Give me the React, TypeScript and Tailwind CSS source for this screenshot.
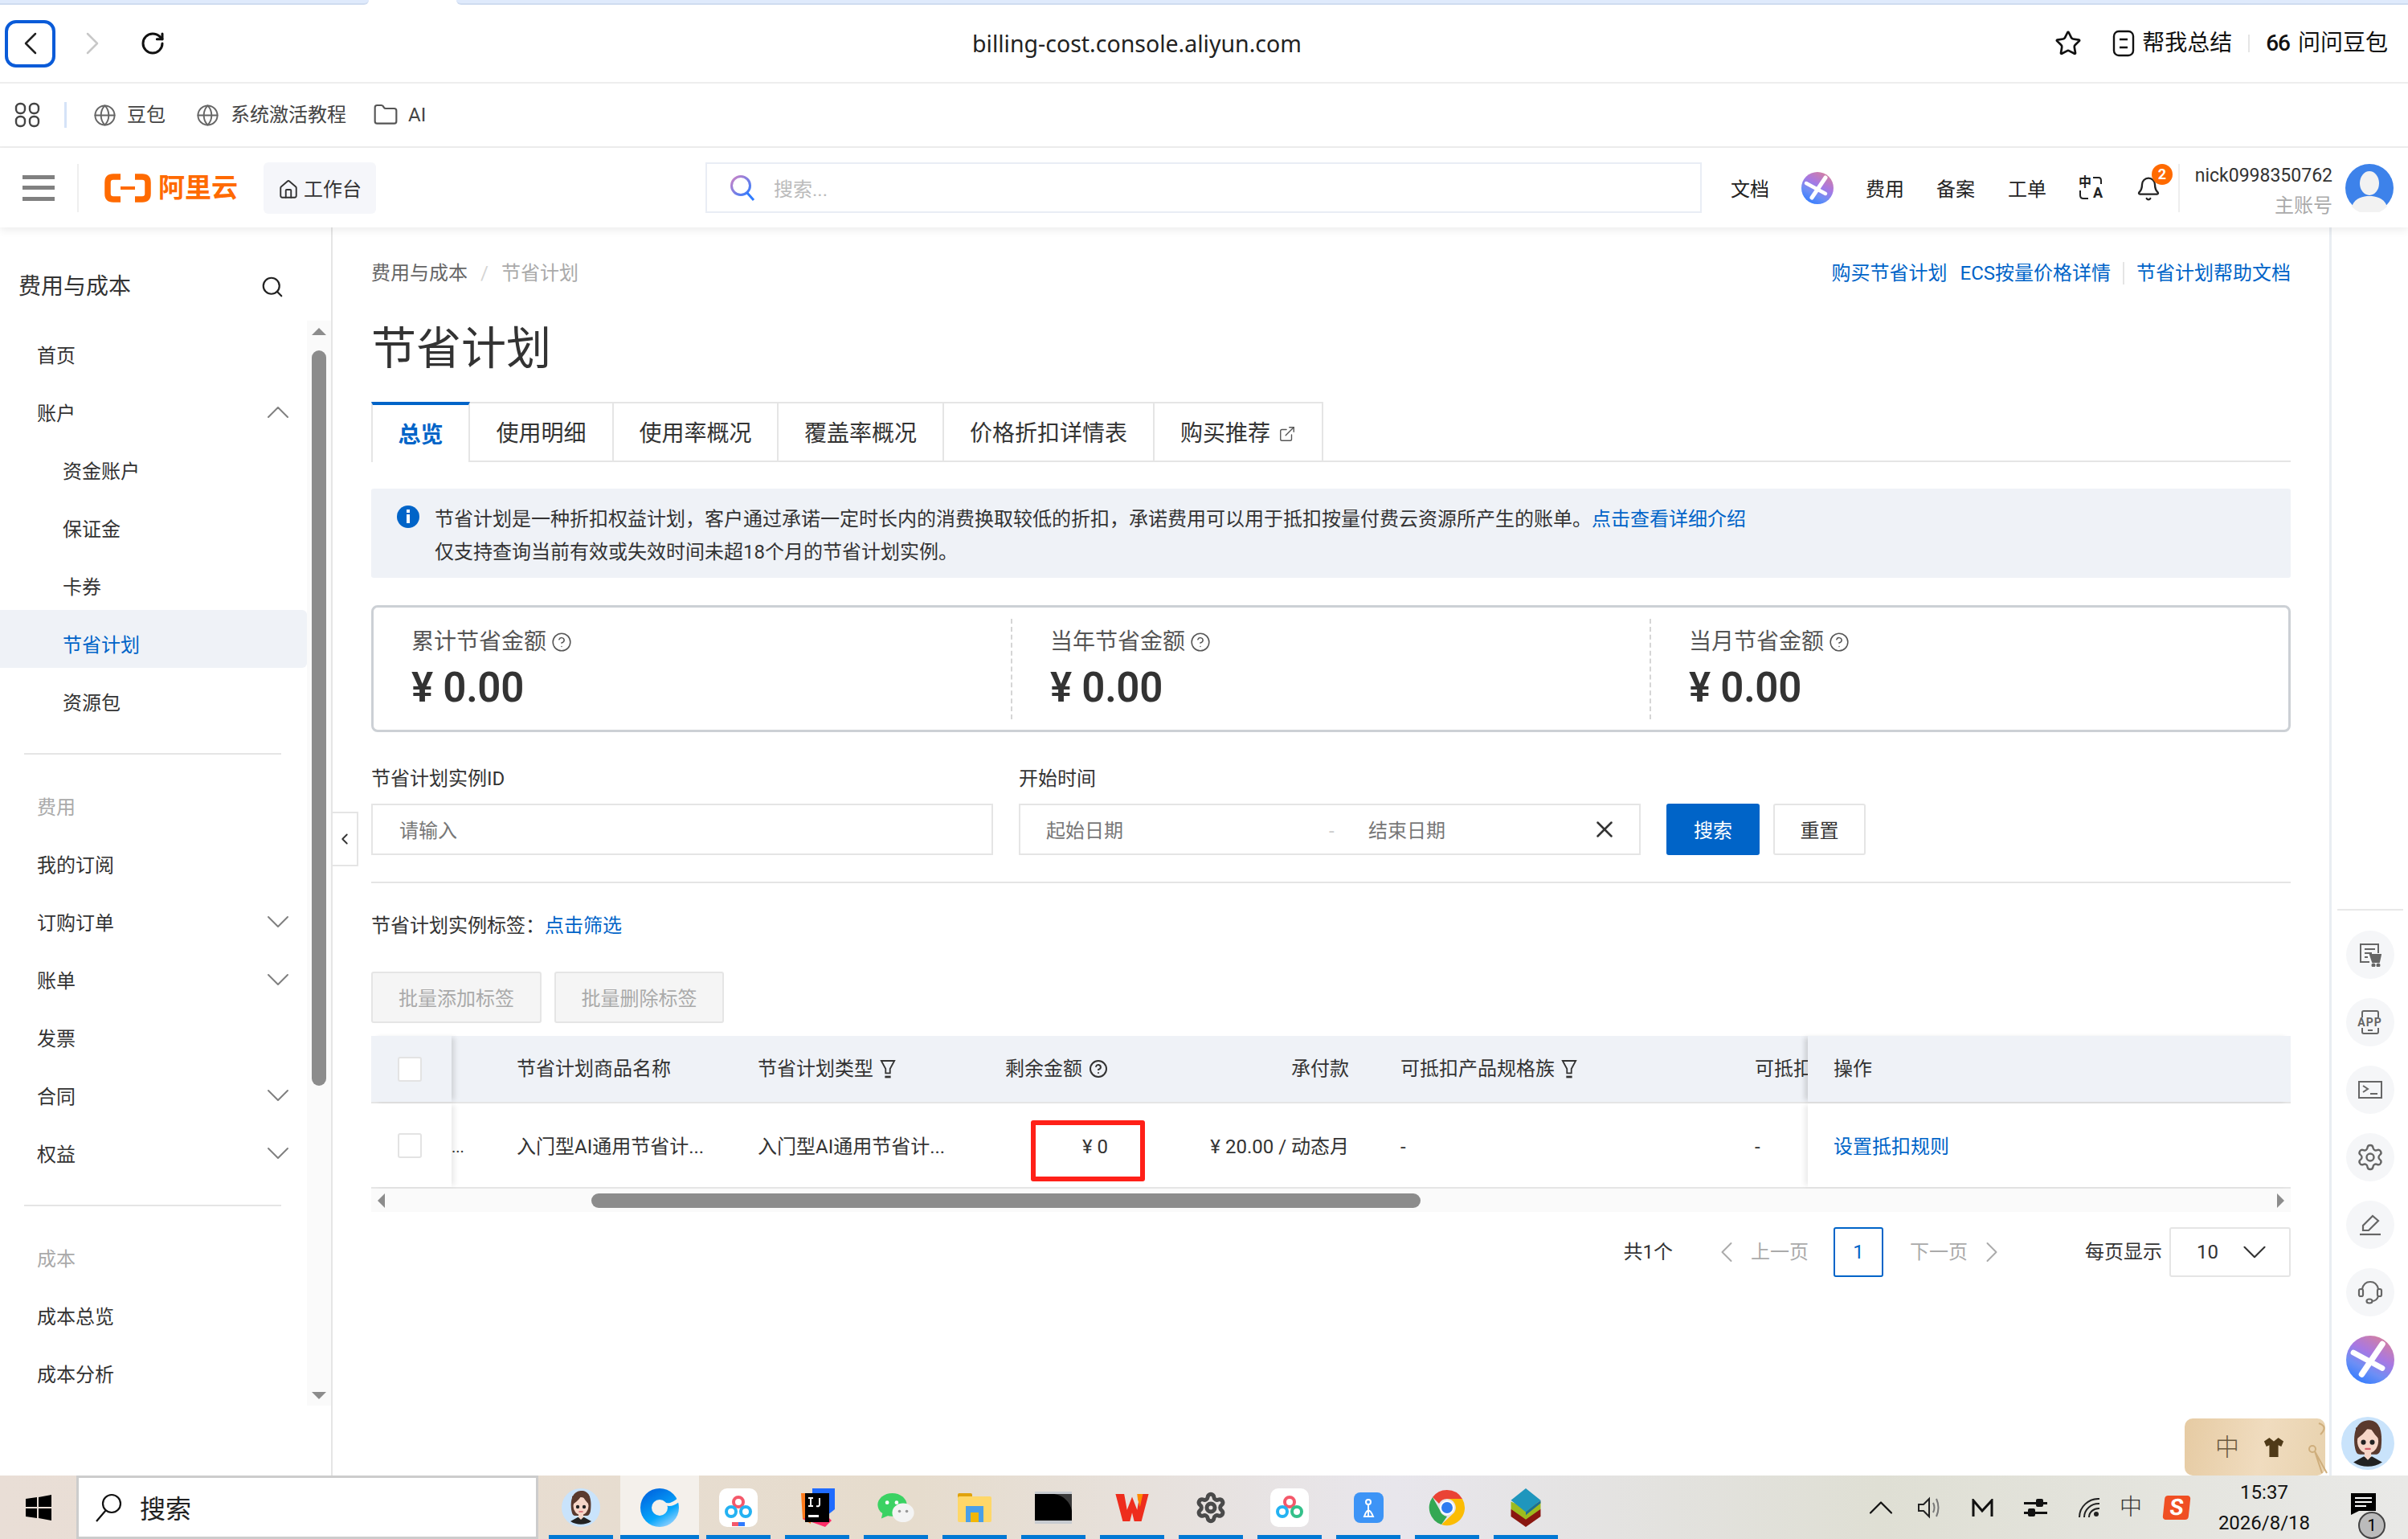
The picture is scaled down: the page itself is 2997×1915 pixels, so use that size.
import {
  Bell,
  ChevronDown,
  ChevronLeft,
  ChevronRight,
  ChevronUp,
  CircleHelp,
  ExternalLink,
  Folder,
  Globe,
  House,
  RotateCw,
  Search,
  Settings,
  Star,
  X,
} from "lucide-react";

const nav = [
  { label: "首页" },
  { label: "账户", arrow: "up" },
  { label: "资金账户", sub: true },
  { label: "保证金", sub: true },
  { label: "卡券", sub: true },
  { label: "节省计划", sub: true, active: true },
  { label: "资源包", sub: true },
  { divider: true },
  { label: "费用", muted: true },
  { label: "我的订阅" },
  { label: "订购订单", arrow: "down" },
  { label: "账单", arrow: "down" },
  { label: "发票" },
  { label: "合同", arrow: "down" },
  { label: "权益", arrow: "down" },
  { divider: true },
  { label: "成本", muted: true },
  { label: "成本总览" },
  { label: "成本分析" },
];

const tabs = [
  { label: "使用明细", w: "w-[179px]" },
  { label: "使用率概况", w: "w-[205px]" },
  { label: "覆盖率概况", w: "w-[206px]" },
  { label: "价格折扣详情表", w: "w-[262px]" },
];

const stats = ["累计节省金额", "当年节省金额", "当月节省金额"];

// 带渐变的 AI 图标
function AiBadge({ id, size }: { id: string; size: number }) {
  return (
    <svg width={size} height={size} viewBox="0 0 40 40">
      <defs>
        <linearGradient id={id} x1="0.25" y1="1" x2="0.8" y2="0">
          <stop offset="0" stopColor="#2f7bff" />
          <stop offset="0.3" stopColor="#6d8ff5" />
          <stop offset="0.6" stopColor="#a878e2" />
          <stop offset="1" stopColor="#d8809a" />
        </linearGradient>
      </defs>
      <circle cx="20" cy="20" r="20" fill={`url(#${id})`} />
      <path d="M30 7 L13 32" stroke="#fff" strokeWidth="5" strokeLinecap="round" />
      <path d="M6 14 L30 27" stroke="#fff" strokeWidth="4.5" strokeLinecap="round" />
    </svg>
  );
}

function FilterIcon() {
  return (
    <svg width="20" height="24" viewBox="0 0 22 26" fill="none" stroke="#333" strokeWidth="2">
      <path d="M2 2 H20 L14 13 V19 H8 V13 Z" />
      <path d="M7 24 H15" strokeWidth="3" />
    </svg>
  );
}

function Checkbox() {
  return <div className="w-[30px] h-[31px] rounded-[3px] border-2 border-[#e3e3e3] bg-white" />;
}

function GirlAvatar({ size }: { size: number }) {
  return (
    <svg width={size} height={size} viewBox="0 0 48 48">
      <circle cx="24" cy="24" r="24" fill="#c9e3fb" />
      <path d="M12 26 C10 8 18 3 25 3 C33 3 38 10 36 28 C35 33 33 34 31 34 H17 C14 34 13 32 12 26Z" fill="#5a3a2e" />
      <ellipse cx="24" cy="22" rx="9.5" ry="11" fill="#f6d6c8" />
      <path d="M14 20 C18 17 23 13 25 8 C28 13 31 17 34 20 L35 10 L25 4 L13 10Z" fill="#5a3a2e" />
      <circle cx="20" cy="23" r="2.2" fill="#222" />
      <circle cx="28" cy="23" r="2.2" fill="#222" />
      <path d="M22 29 H26" stroke="#d4606a" strokeWidth="1.5" strokeLinecap="round" />
      <path d="M20 36 H28 L37 41 A24 24 0 0 1 11 41Z" fill="#222" />
      <path d="M21 32 H27 V36 L24 39 L21 36Z" fill="#f6d6c8" />
    </svg>
  );
}

// 任务栏图标
function Edge() {
  return (
    <svg width="48" height="48" viewBox="0 0 48 48" fill="none">
      <defs>
        <linearGradient id="tbq" x1="0.3" y1="0" x2="0.9" y2="1">
          <stop offset="0" stopColor="#0067e0" />
          <stop offset="0.6" stopColor="#06a6fb" />
          <stop offset="1" stopColor="#b6dcff" />
        </linearGradient>
      </defs>
      <circle cx="24" cy="24" r="24" fill="url(#tbq)" />
      <circle cx="24" cy="24" r="10" fill="#f4f0eb" />
      <path d="M30 17 C34 20 40 18 48 11 V17 C42 22 36 23 31 21Z" fill="#f4f0eb" />
    </svg>
  );
}

function BaiduCloud({ accent }: { accent?: boolean }) {
  return (
    <svg width="48" height="48" viewBox="0 0 48 48" fill="none">
      <rect width="48" height="48" rx="10" fill="#fff" />
      <circle cx="24" cy="17" r="6" stroke="#f4586a" strokeWidth="4" />
      <circle cx="15" cy="29" r="6" stroke="#24b2f2" strokeWidth="4" />
      <circle cx="33" cy="29" r="6" stroke={accent ? "#34c08a" : "#24b2f2"} strokeWidth="4" />
      {!accent && <rect x="16" y="42" width="8" height="5" fill="#f4586a" />}
      {!accent && <rect x="24" y="42" width="8" height="5" fill="#2f7bff" />}
    </svg>
  );
}

function Idea() {
  return (
    <svg width="48" height="48" viewBox="0 0 48 48">
      <path d="M4 6 H18 L16 44 L6 38Z" fill="#ff7a1a" />
      <path d="M18 0 H46 V26 L36 34 H18Z" fill="#1f6bff" />
      <path d="M6 38 L34 48 L42 40 L30 28Z" fill="#ff2d68" />
      <rect x="9" y="6" width="30" height="36" fill="#000" />
      <path d="M13 12 H19 M16 12 V22 M13 22 H19 M27 12 V20 Q27 23 23 22" stroke="#fff" strokeWidth="2" fill="none" />
      <rect x="13" y="33" width="13" height="3" fill="#fff" />
    </svg>
  );
}

function WeChat() {
  return (
    <svg width="48" height="38" viewBox="0 0 52 42">
      <ellipse cx="21" cy="17" rx="20" ry="16" fill="#3bd263" />
      <path d="M8 27 L6 36 L18 31Z" fill="#3bd263" />
      <circle cx="14" cy="14" r="2.6" fill="#fff" />
      <circle cx="27" cy="14" r="2.6" fill="#fff" />
      <ellipse cx="36" cy="28" rx="15" ry="13" fill="#f4f4f4" />
      <circle cx="31" cy="26" r="2" fill="#999" />
      <circle cx="41" cy="26" r="2" fill="#999" />
    </svg>
  );
}

function Explorer() {
  return (
    <svg width="42" height="36" viewBox="0 0 42 36">
      <rect x="0" y="0" width="18" height="10" rx="2" fill="#e0a20c" />
      <rect x="0" y="4" width="42" height="32" rx="2" fill="#ffd768" />
      <path d="M10 16 H32 V36 H26 V24 H16 V36 H10Z" fill="#4a9fe8" />
      <rect x="16" y="24" width="10" height="12" fill="#f2b705" />
    </svg>
  );
}

function Terminal() {
  return (
    <svg width="46" height="40" viewBox="0 0 46 40">
      <rect width="46" height="40" fill="#c7cbd0" />
      <rect y="3" width="46" height="33" fill="#000" />
      <path d="M46 3 H24 C36 5 44 13 46 24Z" fill="#3a3a3a" />
    </svg>
  );
}

function Wps() {
  return (
    <svg width="48" height="34" viewBox="0 0 50 38">
      <path d="M2 0 H14 L18 22 L25 4 L32 22 L36 0 H48 L38 38 H28 L25 26 L22 38 H12Z" fill="#ee2d1d" />
      <path d="M32 0 H40 L36 18 L33 8Z" fill="#ff8a00" />
    </svg>
  );
}

function Chrome() {
  return (
    <svg width="48" height="48" viewBox="0 0 48 48">
      <path d="M24 2 A22 22 0 0 1 43 13 H24 A11 11 0 0 0 14 19 L6 11 A22 22 0 0 1 24 2Z" fill="#ea4335" />
      <path d="M6 11 L15 27 A11 11 0 0 0 24 35 L17 45 A22 22 0 0 1 6 11Z" fill="#34a853" />
      <path d="M43 13 A22 22 0 0 1 17 45 L33 30 A11 11 0 0 0 24 13Z" fill="#fbbc04" />
      <circle cx="24" cy="24" r="9" fill="#fff" />
      <circle cx="24" cy="24" r="7" fill="#2f7cf0" />
    </svg>
  );
}

function Stack() {
  return (
    <svg width="44" height="48" viewBox="0 0 44 52">
      <path d="M22 34 L42 28 V38 L22 52 L2 38 V28Z" fill="#8a1710" />
      <path d="M22 26 L42 18 V28 L22 42 L2 28 V18Z" fill="#9dbb1e" />
      <path d="M22 0 L42 16 L22 32 L2 16Z" fill="#1f96bd" />
      <path d="M22 32 L42 16 V20 L22 36Z" fill="#1d6e94" />
    </svg>
  );
}

function ToolIcon() {
  return (
    <svg width="37" height="38" viewBox="0 0 37 38" fill="none">
      <rect width="37" height="38" rx="8" fill="#3d94f6" />
      <circle cx="18" cy="12" r="3" stroke="#fff" strokeWidth="2" />
      <path d="M13 30 Q18 15 24 30Z M18 16 V30" stroke="#fff" strokeWidth="2" />
    </svg>
  );
}

const taskIcons = [
  <GirlAvatar key="girl" size={48} />,
  <Edge key="edge" />,
  <BaiduCloud key="baidu" />,
  <Idea key="idea" />,
  <WeChat key="wechat" />,
  <Explorer key="explorer" />,
  <Terminal key="terminal" />,
  <Wps key="wps" />,
  <Settings key="gear" size={40} color="#4a4a4a" strokeWidth={3} />,
  <BaiduCloud key="baidu2" accent />,
  <ToolIcon key="tool" />,
  <Chrome key="chrome" />,
  <Stack key="stack" />,
];

function Sidebar() {
  return (
    <aside className="w-[414px] shrink-0 border-r-2 border-[#e5e5e5] flex flex-col">
      <div className="h-[116px] pt-[32px] pl-[23px] pr-[58px] flex items-center justify-between">
        <span className="text-[28px] text-[#333]">费用与成本</span>
        <Search size={30} color="#222" strokeWidth={1.75} />
      </div>
      <div className="flex">
        <div className="w-[382px]">
          {nav.map((item, i) =>
            item.divider ? (
              <div key={i} className="h-[2px] bg-[#e5e5e5] ml-[30px] mr-[32px] mt-[34px] mb-[22px]" />
            ) : (
              <div
                key={i}
                className={`h-[72px] pt-[16px] flex items-center justify-between pr-[12px] text-[24px] rounded-r-[6px]
                  ${item.sub ? "pl-[78px]" : "pl-[46px]"}
                  ${item.active ? "bg-[#eff2f7] text-[#0064c8]" : item.muted ? "text-[#aaaaaa]" : "text-[#333]"}`}
              >
                <span>{item.label}</span>
                {item.arrow === "up" && <ChevronUp size={48} color="#808080" strokeWidth={1} className="-my-[10px] -translate-y-[2px]" />}
                {item.arrow === "down" && <ChevronDown size={48} color="#808080" strokeWidth={1} className="-my-[10px] -translate-y-[2px]" />}
              </div>
            ),
          )}
        </div>
        {/* 滚动条 */}
        <div className="w-[30px] h-[1350px] bg-[#fafafa] flex flex-col items-center pt-[9px]">
          <div className="w-0 h-0 border-x-[9px] border-x-transparent border-b-[9px] border-b-[#8c8c8c]" />
          <div className="w-[18px] h-[915px] mt-[19px] rounded-[9px] bg-[#8c8c8c]" />
          <div className="w-0 h-0 mt-[381px] border-x-[9px] border-x-transparent border-t-[9px] border-t-[#8c8c8c]" />
        </div>
      </div>
    </aside>
  );
}

function Tabs() {
  return (
    <div className="mt-[33px] h-[75px] flex">
      <div className="w-[123px] h-[75px] pt-[4px] border-t-4 border-x-2 border-t-[#0064c8] border-x-[#e5e5e5] flex items-center justify-center text-[28px] font-bold text-[#0064c8]">
        总览
      </div>
      {tabs.map((t) => (
        <div
          key={t.label}
          className={`${t.w} h-[75px] pt-[4px] border-t-2 border-r-2 border-b-2 border-[#e5e5e5] flex items-center justify-center text-[28px] text-[#333]`}
        >
          {t.label}
        </div>
      ))}
      <div className="w-[210px] h-[75px] pt-[4px] border-t-2 border-r-2 border-b-2 border-[#e5e5e5] flex items-center justify-center gap-[10px] text-[28px] text-[#333]">
        购买推荐
        <ExternalLink size={22} color="#555" strokeWidth={1.5} />
      </div>
      <div className="flex-1 border-b-2 border-[#e5e5e5]" />
    </div>
  );
}

function Overview() {
  return (
    <div className="mt-[34px] h-[158px] rounded-[8px] border-[3px] border-[#ccd0d5] flex items-center">
      {stats.map((s, i) => (
        <div key={s} className={`flex-1 h-[125px] ${i < 2 ? "border-r-2 border-dashed border-[#d5d5d5]" : ""}`}>
          <div className="pl-[47px] pt-[9px]">
            <div className="flex items-center gap-[6px] text-[28px] leading-[40px] text-[#555]">
              {s}
              <CircleHelp size={26} color="#555" strokeWidth={1.4} />
            </div>
            <div className="mt-[6px] text-[51px] leading-[62px] font-semibold tracking-[-0.3px] text-[#333]">¥ 0.00</div>
          </div>
        </div>
      ))}
    </div>
  );
}

function QueryForm() {
  return (
    <div className="mt-[43px]">
      <div className="flex h-[30px] items-center text-[24px] text-[#333]">
        <span className="w-[806px]">节省计划实例ID</span>
        <span>开始时间</span>
      </div>
      <div className="mt-[16px] flex h-[64px] text-[24px]">
        <div className="w-[774px] pt-[4px] border-2 border-[#e5e5e5] flex items-center pl-[33px] text-[#777]">请输入</div>
        <div className="ml-[32px] w-[774px] pt-[4px] border-2 border-[#e5e5e5] flex items-center pl-[32px] pr-[26px] text-[#777]">
          <span className="w-[352px]">起始日期</span>
          <span className="w-[49px] text-[#ccc]">-</span>
          <span className="flex-1">结束日期</span>
          <X size={34} color="#333" strokeWidth={1.75} className="-mt-[4px]" />
        </div>
        <div className="ml-[32px] w-[116px] pt-[4px] bg-[#0064c8] rounded-[3px] flex items-center justify-center text-white">搜索</div>
        <div className="ml-[17px] w-[115px] pt-[4px] border-2 border-[#e5e5e5] rounded-[3px] flex items-center justify-center text-[#333]">重置</div>
      </div>
    </div>
  );
}

function PlanTable() {
  return (
    <div className="relative mt-[16px] text-[24px] text-[#333]">
      {/* 表头 */}
      <div className="flex h-[84px] bg-[#eff2f7] border-b-2 border-[#e5e5e5]">
        <div className="w-[100px] flex items-center pl-[33px] shadow-[6px_0_6px_-2px_rgba(0,0,0,0.12)]">
          <Checkbox />
        </div>
        <div className="w-[81px]" />
        <div className="w-[300px] flex items-center">节省计划商品名称</div>
        <div className="w-[308px] flex items-center gap-[8px]">节省计划类型<FilterIcon /></div>
        <div className="w-[128px] flex items-center gap-[8px]">
          <span className="whitespace-nowrap">剩余金额</span>
          <CircleHelp size={24} color="#333" strokeWidth={2} className="shrink-0" />
        </div>
        <div className="w-[300px] flex items-center justify-end">承付款</div>
        <div className="w-[64px]" />
        <div className="w-[441px] flex items-center gap-[8px]">可抵扣产品规格族<FilterIcon /></div>
        <div className="w-[66px] overflow-hidden flex items-center whitespace-nowrap">可抵扣</div>
        <div className="flex-1 flex items-center pl-[32px] shadow-[-6px_0_6px_-2px_rgba(0,0,0,0.14)]">操作</div>
      </div>
      {/* 数据行 */}
      <div className="relative flex h-[106px] border-b-2 border-[#e5e5e5]">
        <div className="w-[100px] flex items-center pl-[33px] shadow-[6px_0_6px_-2px_rgba(0,0,0,0.08)]">
          <Checkbox />
        </div>
        <div className="w-[81px] pt-[4px] flex items-center text-[20px] leading-none">...</div>
        <div className="w-[300px] pt-[4px] flex items-center whitespace-nowrap">入门型AI通用节省计...</div>
        <div className="w-[308px] pt-[4px] flex items-center whitespace-nowrap">入门型AI通用节省计...</div>
        <div className="w-[128px] pt-[4px] flex items-center justify-end">¥ 0</div>
        <div className="w-[300px] pt-[4px] flex items-center justify-end">¥ 20.00 / 动态月</div>
        <div className="w-[64px]" />
        <div className="w-[441px] pt-[4px] flex items-center">-</div>
        <div className="w-[66px] pt-[4px] flex items-center">-</div>
        <div className="flex-1 pt-[4px] flex items-center pl-[32px] text-[#0064c8] shadow-[-6px_0_6px_-2px_rgba(0,0,0,0.08)]">设置抵扣规则</div>
        <div className="absolute left-[821px] top-[21px] w-[142px] h-[76px] border-[6px] border-[#ff2018] rounded-[3px]" />
      </div>
      {/* 横向滚动条 */}
      <div className="h-[29px] bg-[#fafafa] flex items-center px-[8px]">
        <div className="w-0 h-0 border-y-[9px] border-y-transparent border-r-[9px] border-r-[#8c8c8c]" />
        <div className="ml-[257px] w-[1032px] h-[18px] rounded-[9px] bg-[#8c8c8c]" />
        <div className="ml-auto w-0 h-0 border-y-[9px] border-y-transparent border-l-[9px] border-l-[#8c8c8c]" />
      </div>
    </div>
  );
}

function Pagination() {
  return (
    <div className="mt-[19px] h-[62px] flex items-center justify-end text-[24px] text-[#333]">
      <span>共1个</span>
      <ChevronLeft size={44} color="#aaa" strokeWidth={1.1} className="ml-[45px]" />
      <span className="ml-[8px] text-[#aaa]">上一页</span>
      <div className="ml-[31px] w-[62px] h-[62px] border-2 border-[#0064c8] rounded-[3px] flex items-center justify-center text-[#0064c8]">1</div>
      <span className="ml-[33px] text-[#aaa]">下一页</span>
      <ChevronRight size={44} color="#aaa" strokeWidth={1.1} className="ml-[8px]" />
      <span className="ml-[94px]">每页显示</span>
      <div className="ml-[9px] w-[151px] h-[62px] border-2 border-[#e5e5e5] rounded-[3px] flex items-center justify-between pl-[32px] pr-[18px]">
        <span>10</span>
        <ChevronDown size={50} color="#333" strokeWidth={1} />
      </div>
    </div>
  );
}

function RightRail() {
  const c = "#666";
  return (
    <div className="w-[98px] shrink-0 border-l-[3px] border-[#e9edf2] flex flex-col items-center">
      <div className="mt-[848px] w-[82px] h-[2px] bg-[#e8e8e8]" />
      <div className="mt-[25px] flex flex-col gap-[24px]">
        <div className="w-[60px] h-[60px] rounded-full bg-[#f5f6f8] flex items-center justify-center">
          <svg width="28" height="30" viewBox="0 0 28 30" fill="none" stroke={c} strokeWidth="2">
            <path d="M13 24 H2 V2 H24 V13" />
            <path d="M7 8 H20 M7 13 H16 M7 18 H11" />
            <path d="M14 15 H27 L25 24 H17Z" fill={c} />
            <circle cx="18" cy="28" r="1.5" fill={c} />
            <circle cx="24" cy="28" r="1.5" fill={c} />
          </svg>
        </div>
        <div className="w-[60px] h-[60px] rounded-full bg-[#f5f6f8] flex items-center justify-center relative">
          <svg width="26" height="30" viewBox="0 0 26 30" fill="none" stroke={c} strokeWidth="2">
            <path d="M3 9 V3 Q3 1 5 1 H21 Q23 1 23 3 V9 M3 22 V27 Q3 29 5 29 H21 Q23 29 23 27 V22 M10 25 H16" />
          </svg>
          <span className="absolute text-[14px] font-bold text-[#666] leading-none tracking-[1px] font-[Roboto,sans-serif]">APP</span>
        </div>
        <div className="w-[60px] h-[60px] rounded-full bg-[#f5f6f8] flex items-center justify-center">
          <svg width="30" height="22" viewBox="0 0 30 22" fill="none" stroke={c} strokeWidth="2">
            <rect x="1" y="1" width="28" height="20" />
            <path d="M6 6 L12 10 L6 14 M15 16 H24" />
          </svg>
        </div>
        <div className="w-[60px] h-[60px] rounded-full bg-[#f5f6f8] flex items-center justify-center">
          <Settings size={36} color={c} strokeWidth={1.6} />
        </div>
        <div className="w-[60px] h-[60px] rounded-full bg-[#f5f6f8] flex items-center justify-center">
          <svg width="28" height="28" viewBox="0 0 28 28" fill="none" stroke={c} strokeWidth="2.2">
            <path d="M5 21 V15 L17 3 L24 9 L12 21Z" />
            <path d="M1 26 H27" />
          </svg>
        </div>
        <div className="w-[60px] h-[60px] rounded-full bg-[#f5f6f8] flex items-center justify-center">
          <svg width="32" height="30" viewBox="0 0 32 30" fill="none" stroke={c} strokeWidth="2.2">
            <path d="M6 11 Q8 2 16 2 Q24 2 26 11" />
            <rect x="2" y="11" width="5" height="9" rx="2" />
            <rect x="25" y="11" width="5" height="9" rx="2" />
            <path d="M26 20 Q24 26 18 26" />
            <ellipse cx="15" cy="26" rx="3.5" ry="2.5" />
          </svg>
        </div>
        <AiBadge id="railai" size={60} />
      </div>
    </div>
  );
}

function Taskbar() {
  return (
    <div className="h-[79px] shrink-0 flex items-stretch bg-[linear-gradient(90deg,#e9ded6_0%,#e6dccd_38%,#e8e6ec_58%,#dfdfd4_78%,#e9e9e7_100%)]">
      <div className="w-[95px] flex items-center justify-center">
        <svg width="32" height="32" viewBox="0 0 32 32" fill="#000">
          <path d="M0 5 L14 3 V15 H0Z M16 3 L32 0 V15 H16Z M0 17 H14 V29 L0 27Z M16 17 H32 V32 L16 29Z" />
        </svg>
      </div>
      <div className="w-[575px] mr-[4px] pt-[4px] bg-white border-[3px] border-[#cccccc] flex items-center pl-[20px] gap-[22px] text-[32px] text-[#222]">
        <svg width="34" height="36" viewBox="0 0 34 36" fill="none" stroke="#111" strokeWidth="2.2" className="-mt-[4px]">
          <circle cx="21" cy="13" r="11" />
          <path d="M14 21 L2 35" />
        </svg>
        搜索
      </div>
      {taskIcons.map((icon, i) => (
        <div key={i} className={`relative w-[98px] flex items-center justify-center ${i === 1 ? "bg-[#f4f0eb]" : ""}`}>
          {icon}
          <div className={`absolute bottom-0 h-[5px] bg-[#0078d4] ${i === 1 ? "inset-x-0" : "left-[9px] right-[9px]"}`} />
        </div>
      ))}
      <div className="ml-auto flex items-center text-[#111]">
        <div className="w-[60px] flex justify-center"><ChevronUp size={52} strokeWidth={1} /></div>
        <div className="w-[60px] flex justify-center">
          <svg width="30" height="28" viewBox="0 0 30 28" fill="none" stroke="#222" strokeWidth="2">
            <path d="M2 10 H8 L15 3 V25 L8 18 H2Z" />
            <path d="M20 8 Q23 14 20 20 M24 3 Q29 14 24 25" stroke="#777" />
          </svg>
        </div>
        <div className="w-[72px] flex justify-center">
          <svg width="29" height="22" viewBox="0 0 29 22" fill="none" stroke="#111" strokeWidth="3">
            <path d="M3 22 V2 L14 15 L26 2 V22" />
          </svg>
        </div>
        <div className="w-[60px] flex justify-center">
          <svg width="29" height="22" viewBox="0 0 29 22" fill="#111">
            <rect x="0" y="4" width="29" height="3" />
            <rect x="0" y="16" width="29" height="3" />
            <rect x="15" y="0" width="9" height="10" rx="2" />
            <rect x="5" y="12" width="9" height="10" rx="2" />
          </svg>
        </div>
        <div className="w-[74px] flex justify-center">
          <svg width="27" height="24" viewBox="0 0 27 24" fill="none" stroke="#222" strokeWidth="2">
            <path d="M1 24 A24 23 0 0 1 26 1 M7 24 A18 17 0 0 1 26 7 M13 24 A12 11 0 0 1 26 13" />
            <circle cx="22" cy="20" r="3" fill="#222" stroke="none" />
          </svg>
        </div>
        <div className="w-[30px] flex justify-center text-[28px] font-light text-[#333]">中</div>
        <div className="w-[84px] flex justify-center">
          <div className="w-[32px] h-[30px] bg-[#f04f23] rounded-[4px] -skew-x-6 flex items-center justify-center text-white font-bold text-[28px] leading-none font-[Roboto,sans-serif]">S</div>
        </div>
        <div className="w-[134px] flex flex-col items-center gap-[12px] text-[24px] leading-[26px] text-[#111]">
          <span>15:37</span>
          <span>2026/8/18</span>
        </div>
        <div className="w-[112px] flex justify-center relative">
          <svg width="31" height="27" viewBox="0 0 31 27" className="-mt-[8px]">
            <path d="M0 0 H31 V22 H10 L0 27Z" fill="#000" />
            <path d="M5 6 H26 M5 11 H26 M5 16 H19" stroke="#fff" strokeWidth="2" />
          </svg>
          <div className="absolute left-[50px] top-[15px] w-[34px] h-[34px] rounded-full bg-[#bbb] border-2 border-[#444] flex items-center justify-center text-[20px] leading-none text-black">1</div>
        </div>
      </div>
    </div>
  );
}

export default function App() {
  return (
    <div className="relative w-[2997px] h-[1915px] overflow-hidden bg-white flex flex-col font-[Roboto,'Noto_Sans_CJK_SC',sans-serif] text-[#333] whitespace-nowrap">
      {/* 浏览器标签条 */}
      <div className="h-[6px] shrink-0 flex">
        <div className="w-[459px] bg-[#dfeafc] border-b-2 border-[#cfdcf0] rounded-br-[10px]" />
        <div className="w-[109px]" />
        <div className="flex-1 bg-[#dfeafc] border-b-2 border-[#cfdcf0] rounded-bl-[10px]" />
      </div>

      {/* 地址栏 */}
      <div className="h-[98px] shrink-0 flex items-center border-b-2 border-[#eeeeee] text-[#111]">
        <div className="ml-[6px] w-[63px] h-[59px] border-4 border-[#0a5bd8] rounded-[14px] flex items-center justify-center">
          <ChevronLeft size={48} color="#222" strokeWidth={1.25} />
        </div>
        <ChevronRight size={48} color="#c8c8c8" strokeWidth={1.25} className="ml-[22px]" />
        <RotateCw size={32} color="#111" strokeWidth={2.25} className="ml-[35px]" />
        <span className="ml-[1004px] text-[28.5px] font-[Noto_Sans,sans-serif] text-[#222]">billing-cost.console.aliyun.com</span>
        <div className="ml-auto flex items-center pr-[25px] text-[28px]">
          <Star size={34} color="#111" strokeWidth={1.9} />
          <svg width="28" height="34" viewBox="0 0 28 34" fill="none" stroke="#111" strokeWidth="2.4" className="ml-[38px]">
            <rect x="2" y="2" width="24" height="30" rx="6" />
            <path d="M9 12 H19 M9 22 H19" />
          </svg>
          <span className="ml-[9px]">帮我总结</span>
          <div className="ml-[20px] w-[2px] h-[22px] bg-[#e5e5e5]" />
          <span className="ml-[20px] font-medium tracking-[-1px]">66</span>
          <span className="ml-[10px]">问问豆包</span>
        </div>
      </div>

      {/* 收藏栏 */}
      <div className="h-[80px] shrink-0 flex items-center border-b-2 border-[#eeeeee] text-[24px] text-[#444]">
        <svg width="32" height="32" viewBox="0 0 32 32" fill="none" stroke="#444" strokeWidth="2.4" className="ml-[18px]">
          <rect x="2" y="2" width="11" height="12" rx="5" />
          <rect x="19" y="2" width="11" height="12" rx="5" />
          <rect x="2" y="18" width="11" height="12" rx="5" />
          <rect x="19" y="18" width="11" height="12" rx="5" />
        </svg>
        <div className="ml-[30px] w-[3px] h-[32px] bg-[#d5e3f8]" />
        <Globe size={29} color="#666" strokeWidth={1.6} className="ml-[33px]" />
        <span className="ml-[13px]">豆包</span>
        <Globe size={29} color="#666" strokeWidth={1.6} className="ml-[38px]" />
        <span className="ml-[14px]">系统激活教程</span>
        <Folder size={32} color="#555" strokeWidth={1.6} className="ml-[33px]" />
        <span className="ml-[12px]">AI</span>
      </div>

      {/* 控制台顶栏 */}
      <header className="relative z-10 h-[99px] shrink-0 flex items-center bg-white shadow-[0_4px_10px_rgba(0,0,0,0.07)]">
        <div className="ml-[28px] w-[40px] h-[32px] flex flex-col justify-between">
          <div className="h-[5px] bg-[#808080]" />
          <div className="h-[5px] bg-[#808080]" />
          <div className="h-[5px] bg-[#808080]" />
        </div>
        <div className="ml-[28px] w-[2px] h-[60px] bg-[#eeeeee]" />
        <svg width="58" height="36" viewBox="0 0 58 36" fill="none" className="ml-[32px]">
          <path d="M20 4 H11 Q4 4 4 11 V25 Q4 32 11 32 H20" stroke="#ff6a00" strokeWidth="7.5" />
          <path d="M38 4 H47 Q54 4 54 11 V25 Q54 32 47 32 H38" stroke="#ff6a00" strokeWidth="7.5" />
          <rect x="20" y="16" width="18" height="4" fill="#ff6a00" />
        </svg>
        <span className="ml-[9px] text-[33px] font-bold leading-none text-[#ff6a00]">阿里云</span>
        <div className="ml-[32px] w-[140px] h-[64px] pt-[4px] bg-[#f5f6fa] rounded-[6px] flex items-center justify-center gap-[6px] text-[24px]">
          <House size={26} color="#333" strokeWidth={1.75} />
          工作台
        </div>
        <div className="ml-[410px] w-[1240px] h-[63px] border-2 border-[#e9edf5] flex items-center pl-[28px]">
          <svg width="32" height="34" viewBox="0 0 32 34" fill="none" strokeWidth="3">
            <defs>
              <linearGradient id="srch" x1="0" y1="0" x2="1" y2="1">
                <stop offset="0" stopColor="#d083c4" />
                <stop offset="1" stopColor="#2f7bff" />
              </linearGradient>
            </defs>
            <circle cx="14" cy="14" r="11.5" stroke="url(#srch)" />
            <path d="M22 23 L30 32" stroke="#2f7bff" />
          </svg>
          <span className="ml-[23px] pt-[4px] text-[24px] text-[#bbbbbb]">搜索...</span>
        </div>
        <span className="ml-[36px] pt-[4px] text-[24px] text-[#222]">文档</span>
        <div className="ml-[40px]"><AiBadge id="headai" size={40} /></div>
        <span className="ml-[40px] pt-[4px] text-[24px] text-[#222]">费用</span>
        <span className="ml-[40px] pt-[4px] text-[24px] text-[#222]">备案</span>
        <span className="ml-[41px] pt-[4px] text-[24px] text-[#222]">工单</span>
        {/* 中英切换 */}
        <div className="relative ml-[40px] w-[30px] h-[30px] font-bold leading-none text-[#222]">
          <span className="absolute left-0 top-0 text-[16px]">中</span>
          <span className="absolute right-0 bottom-0 text-[18px] font-[Roboto,sans-serif]">A</span>
          <svg width="30" height="30" viewBox="0 0 30 30" fill="none" stroke="#222" strokeWidth="2" className="absolute inset-0">
            <path d="M18 2 H25 Q28 2 28 6 V10 M2 18 V24 Q2 28 6 28 H12" />
          </svg>
        </div>
        <div className="relative ml-[41px] mt-[2px]">
          <Bell size={32} color="#222" strokeWidth={1.75} />
          <div className="absolute left-[20px] top-[-15px] w-[26px] h-[26px] rounded-full bg-[#ff6a00] text-white text-[18px] font-bold leading-none flex items-center justify-center">2</div>
        </div>
        <div className="ml-[21px] w-[2px] h-[60px] bg-[#eeeeee]" />
        <div className="ml-[18px] w-[172px] pt-[6px] flex flex-col items-end gap-[10px]">
          <span className="text-[23px] leading-[28px] text-[#333]">nick0998350762</span>
          <span className="text-[24px] leading-[26px] text-[#aaaaaa]">主账号</span>
        </div>
        <div className="ml-[16px] w-[60px] h-[60px]">
          <svg width="60" height="60" viewBox="0 0 60 60">
            <circle cx="30" cy="30" r="30" fill="#3d82ea" />
            <ellipse cx="30" cy="24" rx="12" ry="15" fill="#f2f2f2" />
            <path d="M8 53 C12 42 22 40 30 40 C38 40 48 42 52 53 A30 30 0 0 1 8 53Z" fill="#f2f2f2" />
          </svg>
        </div>
      </header>

      <div className="flex-1 flex min-h-0">
        <Sidebar />
        <main className="relative flex-1 px-[48px] pt-[40px]">
          {/* 面包屑 */}
          <div className="h-[30px] pt-[4px] flex items-center text-[24px]">
            <span className="text-[#666]">费用与成本</span>
            <span className="ml-[16px] text-[#d5d5d5]">/</span>
            <span className="ml-[16px] text-[#aaaaaa]">节省计划</span>
            <div className="ml-auto flex items-center text-[#0064c8]">
              <span>购买节省计划</span>
              <span className="ml-[16px]">ECS按量价格详情</span>
              <div className="ml-[15px] w-[2px] h-[28px] bg-[#e5e5e5]" />
              <span className="ml-[15px]">节省计划帮助文档</span>
            </div>
          </div>
          <h1 className="mt-[44px] h-[70px] pt-[4px] flex items-center text-[56px] leading-none text-[#333]">节省计划</h1>
          <Tabs />
          {/* 提示 */}
          <div className="mt-[33px] h-[111px] bg-[#eff2f7] rounded-[3px] pl-[79px] pt-[18px] relative text-[24px] leading-[41px] text-[#333]">
            <svg width="28" height="28" viewBox="0 0 28 28" className="absolute left-[32px] top-[21px]">
              <circle cx="14" cy="14" r="14" fill="#0064c8" />
              <rect x="12" y="11" width="4" height="11" fill="#fff" />
              <rect x="12" y="5" width="4" height="4" fill="#fff" />
            </svg>
            <div>
              节省计划是一种折扣权益计划，客户通过承诺一定时长内的消费换取较低的折扣，承诺费用可以用于抵扣按量付费云资源所产生的账单。
              <span className="text-[#0064c8]">点击查看详细介绍</span>
            </div>
            <div>仅支持查询当前有效或失效时间未超18个月的节省计划实例。</div>
          </div>
          <Overview />
          <QueryForm />
          <div className="mt-[33px] h-[2px] bg-[#e5e5e5]" />
          <div className="mt-[38px] h-[30px] flex items-center text-[24px]">
            <span>节省计划实例标签：</span>
            <span className="text-[#0064c8]">点击筛选</span>
          </div>
          <div className="mt-[42px] flex gap-[16px]">
            <div className="w-[212px] h-[64px] pt-[4px] bg-[#f5f5f5] border-2 border-[#e5e5e5] rounded-[3px] flex items-center justify-center text-[24px] text-[#aaaaaa]">批量添加标签</div>
            <div className="w-[211px] h-[64px] pt-[4px] bg-[#f5f5f5] border-2 border-[#e5e5e5] rounded-[3px] flex items-center justify-center text-[24px] text-[#aaaaaa]">批量删除标签</div>
          </div>
          <PlanTable />
          <Pagination />
          {/* 侧栏收起按钮 */}
          <div className="absolute left-0 top-[727px] w-[32px] h-[68px] bg-white border-2 border-l-0 border-[#e5e5e5] flex items-center justify-center">
            <ChevronLeft size={22} color="#333" strokeWidth={2} />
          </div>
        </main>
        <RightRail />
      </div>

      <Taskbar />

      {/* 悬浮输入法皮肤 */}
      <div className="absolute left-[2719px] top-[1765px] w-[175px] h-[71px] rounded-[10px] bg-[linear-gradient(100deg,#e6cba3,#f0dcbf_55%,#e8d2ae)] flex items-center pl-[38px] gap-[30px] text-[30px] font-light text-[#6b5a3e]">
        中
        <svg width="26" height="28" viewBox="0 0 28 28" fill="#4f3a18">
          <path d="M8 1 L1 6 L4 13 L8 11 V27 H20 V11 L24 13 L27 6 L20 1 L14 6Z" />
        </svg>
        <svg width="44" height="71" viewBox="0 0 44 71" fill="none" stroke="#cfae7c" strokeWidth="2" className="absolute right-[-12px] top-0">
          <path d="M24 6 Q36 10 26 20" />
          <circle cx="16" cy="38" r="4" />
          <path d="M19 41 L34 68 M19 41 L28 68" />
        </svg>
      </div>
      <div className="absolute left-[2908px] top-[1757px] w-[78px] h-[78px] rounded-full bg-white flex items-center justify-center">
        <GirlAvatar size={66} />
      </div>
    </div>
  );
}
